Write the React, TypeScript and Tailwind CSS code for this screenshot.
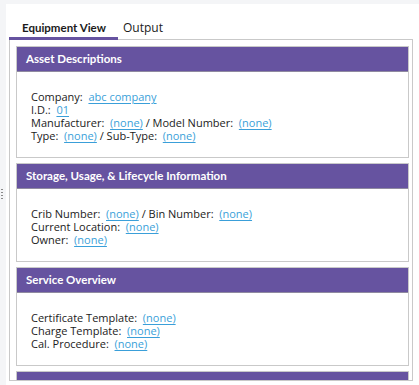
import React from "react";

const L = ({ children }: { children: React.ReactNode }) => (
  <span className="text-[#3a9fd9] underline underline-offset-[2px] decoration-[#3a9fd9]">{children}</span>
);

function Section({ title, children, clip }: { title: string; children?: React.ReactNode; clip?: boolean }) {
  return (
    <div className="border border-[#c9c9c9] bg-white shrink-0">
      <div
        className="h-[25px] bg-[#6653a0] border-b border-[#8f8aa0] flex items-center pl-[9px] text-white font-bold text-[11.5px] whitespace-nowrap"
        style={{ fontFamily: 'Lato, "Open Sans", sans-serif' }}
      >
        {title}
      </div>
      {!clip && (
        <div className="pl-[14px] pt-[18px] pb-[15px] text-[11px] leading-[13px] text-[#1b1b1b] whitespace-pre">
          {children}
        </div>
      )}
    </div>
  );
}

export default function App() {
  return (
    <div
      className="w-[419px] h-[385px] bg-[#f4f5f7] flex overflow-hidden"
      style={{ fontFamily: '"Open Sans", "Noto Sans", sans-serif' }}
    >
      <div className="w-[6px] shrink-0 relative">
        <div className="absolute left-[1px] top-[189px] flex flex-col gap-[2px]">
          <div className="w-[2px] h-[1px] bg-[#8a8a8a]" />
          <div className="w-[2px] h-[1px] bg-[#8a8a8a]" />
          <div className="w-[2px] h-[1px] bg-[#8a8a8a]" />
          <div className="w-[2px] h-[1px] bg-[#8a8a8a]" />
        </div>
      </div>
      <div className="flex-1 mt-[4px] bg-white pl-[3px] pr-[6px] flex flex-col">
        <div className="h-[36px] flex border-b border-[#c9c9c9] shrink-0">
          <div
            className="w-[109px] h-[36px] -mb-px border-b-[3px] border-[#6653a0] pl-[13px] pt-[16px] text-[11.5px] leading-[16px] font-bold text-[#1b1b1b] whitespace-nowrap"
            style={{ fontFamily: 'Lato, "Open Sans", sans-serif' }}
          >
            Equipment View
          </div>
          <div className="h-[36px] pl-[5px] pt-[16px] text-[12px] leading-[16px] text-[#1b1b1b] whitespace-nowrap">
            Output
          </div>
        </div>
        <div className="h-[341px] border-x border-b border-[#c9c9c9] pl-[6px] pr-[3px] pt-[6px] flex flex-col gap-[5px] overflow-hidden shrink-0">
          <Section title="Asset Descriptions">
            <div>Company:  <L>abc company</L></div>
            <div>I.D.:  <L>01</L></div>
            <div>Manufacturer:  <L>(none)</L> / Model Number:  <L>(none)</L></div>
            <div>Type:  <L>(none)</L> / Sub-Type:  <L>(none)</L></div>
          </Section>
          <Section title="Storage, Usage, & Lifecycle Information">
            <div>Crib Number:  <L>(none)</L> / Bin Number:  <L>(none)</L></div>
            <div>Current Location:  <L>(none)</L></div>
            <div>Owner:  <L>(none)</L></div>
          </Section>
          <Section title="Service Overview">
            <div>Certificate Template:  <L>(none)</L></div>
            <div>Charge Template:  <L>(none)</L></div>
            <div>Cal. Procedure:  <L>(none)</L></div>
          </Section>
          <Section title="" clip />
        </div>
      </div>
    </div>
  );
}
